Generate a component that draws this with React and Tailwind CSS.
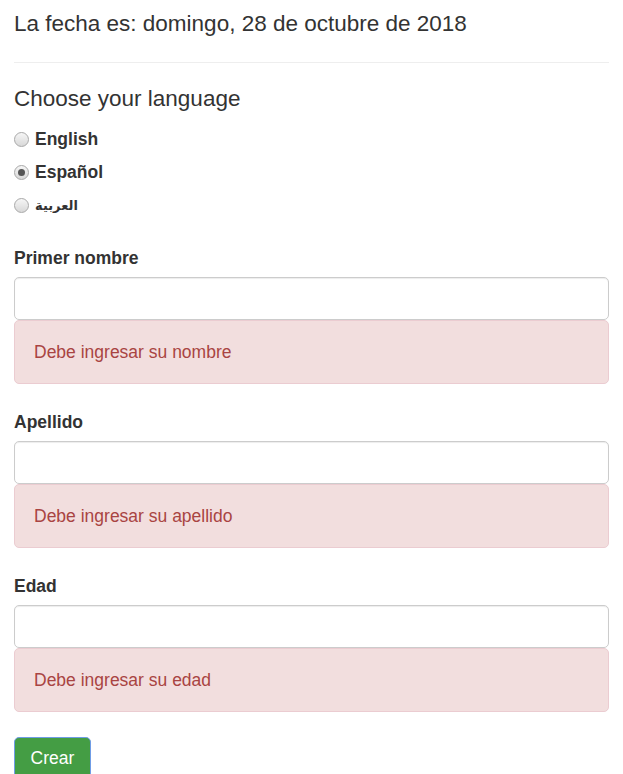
import React from "react";

function Radio({ checked, label, arabic }) {
  return (
    <div className="flex h-[33px] items-center">
      <span className="relative flex h-[15px] w-[15px] items-center justify-center rounded-full border border-[#a9a9a9] bg-gradient-to-b from-[#f6f6f6] to-[#d8d8d8]">
        {checked && <span className="h-[7px] w-[7px] rounded-full bg-[#555]" />}
      </span>
      <span
        className={
          "ml-[6px] font-bold text-[#333] " +
          (arabic ? "text-[13px]" : "text-[17.5px]")
        }
      >
        {label}
      </span>
    </div>
  );
}

function Field({ label, error, first }) {
  return (
    <div className={first ? "mt-[24px]" : "mt-[26px]"}>
      <div className="h-[24px] text-[17.5px] font-bold leading-[24px] text-[#333]">
        {label}
      </div>
      <input
        type="text"
        className="mt-[7px] block h-[43px] w-full rounded-[5px] border border-[#ccc] bg-white px-3 shadow-[inset_0_1px_1px_rgba(0,0,0,0.075)] outline-none"
      />
      <div className="flex h-[64px] items-center rounded-[5px] border border-[#ebccd1] bg-[#f2dede] px-[19px] text-[17.5px] text-[#a94442]">
        {error}
      </div>
    </div>
  );
}

export default function App() {
  return (
    <div
      className="min-h-screen bg-white px-[14px] text-[#333]"
      style={{ fontFamily: '"Liberation Sans", Arial, "DejaVu Sans", sans-serif' }}
    >
      <div className="pt-[11px]">
        <div className="h-[26px] text-[22.5px] leading-[26px]">
          La fecha es: domingo, 28 de octubre de 2018
        </div>
      </div>
      <div className="mt-[25px] border-t border-[#eee]" />
      <div className="mt-[23px] h-[26px] text-[22.5px] leading-[26px]">
        Choose your language
      </div>
      <div className="mt-[11px]">
        <Radio label="English" />
        <Radio label="Español" checked />
        <Radio label="العربية" arabic />
      </div>
      <Field label="Primer nombre" error="Debe ingresar su nombre" first />
      <Field label="Apellido" error="Debe ingresar su apellido" />
      <Field label="Edad" error="Debe ingresar su edad" />
      <button
        type="button"
        className="mt-[25px] h-[42px] w-[77px] rounded-[5px] border border-[#6f9ce6] bg-[#449d44] text-[17.5px] text-white"
      >
        Crear
      </button>
    </div>
  );
}
